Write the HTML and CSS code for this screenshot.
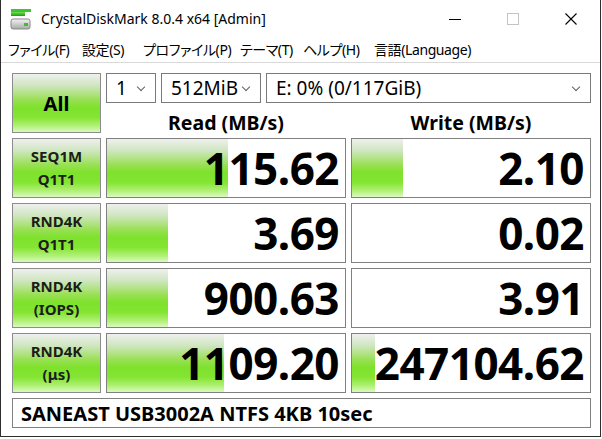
FILE: index.html
```html
<!DOCTYPE html>
<html lang="ja">
<head>
    <meta charset="UTF-8">
    <title>CrystalDiskMark 8.0.4 x64 [Admin]</title>
    <link rel="stylesheet" href="styles.css">
</head>
<body>
    <div class="window">
        <div class="titlebar">
            <svg class="app-icon" width="22" height="22" viewBox="0 0 22 22">
                <defs>
                    <linearGradient id="g1" x1="0" y1="0" x2="0" y2="1">
                        <stop offset="0" stop-color="#6fe04a"/>
                        <stop offset="1" stop-color="#1c9a16"/>
                    </linearGradient>
                    <linearGradient id="g2" x1="0" y1="0" x2="0" y2="1">
                        <stop offset="0" stop-color="#f4f4f4"/>
                        <stop offset="1" stop-color="#a9a9a9"/>
                    </linearGradient>
                </defs>
                <rect x="1" y="1" width="20" height="3" fill="#3fc433"/>
                <rect x="1" y="4" width="14" height="4" fill="url(#g1)"/>
                <rect x="1" y="11" width="19" height="10" rx="2" fill="url(#g2)" stroke="#8a8a8a"/>
                <rect x="14" y="15" width="4" height="3" fill="#3fbf2e"/>
            </svg>
            <span class="title">CrystalDiskMark 8.0.4 x64 [Admin]</span>
            <div class="controls">
                <span class="ctl"><svg width="12" height="12" viewBox="0 0 12 12"><line x1="0" y1="6.5" x2="12" y2="6.5" stroke="#000"/></svg></span>
                <span class="ctl"><svg width="12" height="12" viewBox="0 0 12 12"><rect x="0.5" y="0.5" width="11" height="11" fill="none" stroke="#c4c4c4"/></svg></span>
                <span class="ctl"><svg width="12" height="12" viewBox="0 0 12 12"><path d="M0.5 0.5 L11.5 11.5 M11.5 0.5 L0.5 11.5" stroke="#000" stroke-width="1.1"/></svg></span>
            </div>
        </div>
        <div class="menubar">
            <span class="menu-file">ファイル(F)</span>
            <span class="menu-settings">設定(S)</span>
            <span class="menu-profile">プロファイル(P)</span>
            <span class="menu-theme">テーマ(T)</span>
            <span class="menu-help">ヘルプ(H)</span>
            <span>言語(Language)</span>
        </div>
        <div class="panel">
            <div class="grid">
                <div class="btn btn-all">All</div>
                <div class="combos">
                    <div class="combo combo-count">1<i class="chev"></i></div>
                    <div class="combo combo-size">512MiB<i class="chev"></i></div>
                    <div class="combo combo-drive">E: 0% (0/117GiB)<i class="chev"></i></div>
                </div>
                <div class="head">Read (MB/s)</div>
                <div class="head">Write (MB/s)</div>

                <div class="btn">SEQ1M<br>Q1T1</div>
                <div class="cell"><div class="bar" style="width:121px"></div><span class="num">115.62</span></div>
                <div class="cell"><div class="bar" style="width:51px"></div><span class="num">2.10</span></div>

                <div class="btn">RND4K<br>Q1T1</div>
                <div class="cell"><div class="bar" style="width:61px"></div><span class="num">3.69</span></div>
                <div class="cell"><span class="num">0.02</span></div>

                <div class="btn">RND4K<br>(IOPS)</div>
                <div class="cell"><div class="bar" style="width:61px"></div><span class="num">900.63</span></div>
                <div class="cell"><span class="num">3.91</span></div>

                <div class="btn">RND4K<br>(μs)</div>
                <div class="cell"><div class="bar" style="width:117px"></div><span class="num">1109.20</span></div>
                <div class="cell"><div class="bar" style="width:23px"></div><span class="num">247104.62</span></div>

                <div class="comment">SANEAST USB3002A NTFS 4KB 10sec</div>
            </div>
        </div>
    </div>
</body>
</html>
```

FILE: styles.css
```css
/* Reset */
* {
    margin: 0;
    padding: 0;
    box-sizing: border-box;
}

body {
    background: #fff;
    font-family: 'Noto Sans', 'Noto Sans CJK JP', sans-serif;
    color: #000;
}

/* Window frame */
.window {
    width: 601px;
    height: 437px;
    border: 1px solid #2f2f2f;
    border-top: none;
    display: flex;
    flex-direction: column;
    background: #fff;
}

/* Title bar */
.titlebar {
    height: 31px;
    display: flex;
    align-items: center;
}

.app-icon {
    margin-left: 9px;
    margin-top: 7px;
}

.title {
    margin-left: 9px;
    margin-top: 6px;
    font-size: 14px;
}

.controls {
    margin-left: auto;
    display: flex;
    height: 100%;
}

.ctl {
    width: 58px;
    display: flex;
    align-items: center;
    justify-content: center;
    padding-top: 7px;
}

/* Menu bar */
.menubar {
    height: 32px;
    display: flex;
    align-items: center;
    padding: 4px 0 0 7px;
    font-size: 14px;
    letter-spacing: -0.4px;
    border-bottom: 1px solid #d9d9d9;
    font-feature-settings: "palt";
}

.menu-file { width: 74px; }
.menu-settings { width: 61px; }
.menu-profile { width: 97px; }
.menu-theme { width: 63px; }
.menu-help { width: 71px; }

/* Main panel */
.panel {
    padding: 10px 0 0 11px;
}

.grid {
    display: grid;
    grid-template-columns: 89px 240px 240px;
    grid-template-rows: 30px 25px repeat(4, 60px) 30px;
    gap: 5px;
}

/* Green buttons and bars share one gradient */
.btn,
.bar {
    background: linear-gradient(to bottom,
        #eef0ed 0%,
        #cfe6c0 20%,
        #98e052 45%,
        #7ee22c 58%,
        #84e532 75%,
        #b3f17a 90%,
        #dbf9c2 100%);
}

.btn {
    border: 1px solid #8c8c8c;
    display: flex;
    align-items: center;
    justify-content: center;
    text-align: center;
    font-weight: 700;
    font-size: 15px;
    line-height: 23px;
    color: #1c1c1c;
}

.btn-all {
    grid-row: 1 / 3;
    font-size: 20px;
    color: #000;
}

/* Comboboxes */
.combos {
    grid-column: 2 / 4;
    display: flex;
    gap: 5px;
}

.combo {
    position: relative;
    height: 30px;
    border: 1px solid #7a7a7a;
    font-size: 19px;
    line-height: 28px;
    padding-left: 9px;
}

.combo-count { width: 50px; }
.combo-size { width: 100px; }
.combo-drive { flex: 1; }

.chev {
    position: absolute;
    right: 11px;
    top: 10px;
    width: 6px;
    height: 6px;
    border-right: 1px solid #606060;
    border-bottom: 1px solid #606060;
    transform: rotate(45deg);
}

/* Column headers */
.head {
    align-self: end;
    text-align: center;
    font-weight: 700;
    font-size: 19.5px;
    line-height: 20px;
}

/* Result cells */
.cell {
    position: relative;
    border: 1px solid #808080;
    background: #fff;
    display: flex;
    align-items: center;
    justify-content: flex-end;
    padding-right: 6px;
}

.bar {
    position: absolute;
    left: 0;
    top: 0;
    bottom: 0;
}

.num {
    position: relative;
    font-weight: 700;
    font-size: 44px;
    line-height: 58px;
    letter-spacing: -0.5px;
}

/* Comment line */
.comment {
    grid-column: 1 / 4;
    border: 1px solid #808080;
    font-weight: 700;
    font-size: 20px;
    line-height: 28px;
    padding: 1px 0 0 8px;
}
```
